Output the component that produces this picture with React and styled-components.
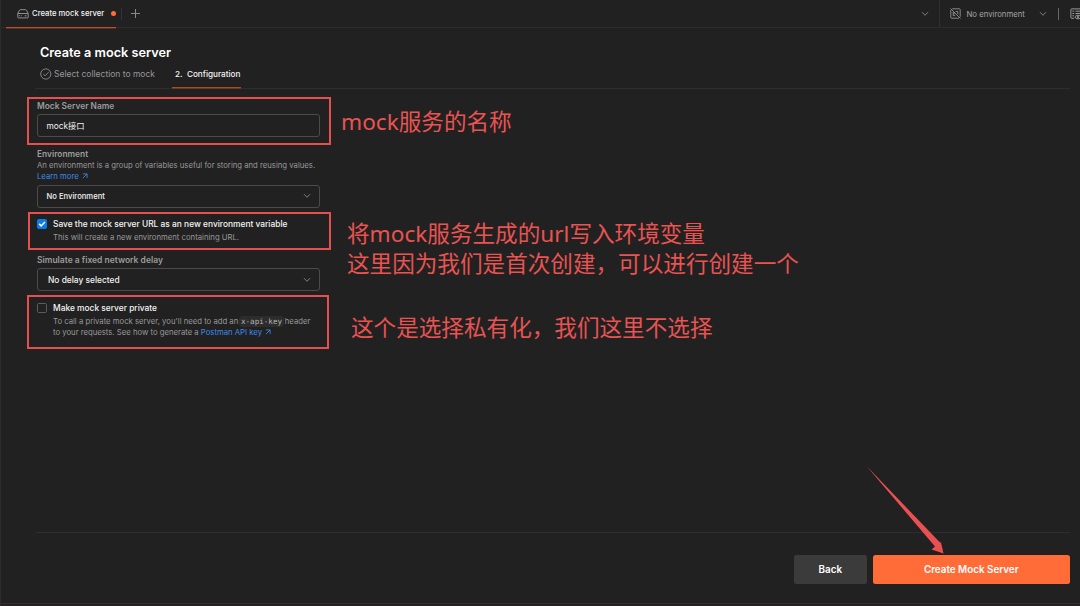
import React from "react";
import styled, { createGlobalStyle } from "styled-components";

const Global = createGlobalStyle`
  *, *::before, *::after { box-sizing: border-box; }
  body { margin: 0; background: #212121; overflow: hidden; }
  button, input { font: inherit; }
`;

const Window = styled.div`
  position: relative;
  width: 1080px;
  height: 606px;
  display: flex;
  flex-direction: column;
  overflow: hidden;
  background: #212121;
  border-left: 1px solid #2c2c2c;
  color: #fff;
  font-family: Inter, "Noto Sans CJK SC", sans-serif;
  font-size: 8.35px;
  white-space: nowrap;
`;

const TabBar = styled.header`
  display: flex;
  height: 28px;
  flex: none;
  border-bottom: 1px solid #2c2c2c;
`;

const Tab = styled.div`
  display: flex;
  align-items: center;
  width: 110px;
  height: 28px;
  margin-left: 5px;
  padding: 0 0 0 11px;
  border-bottom: 1px solid #b8502d;
  box-shadow: 0 1px 0 #5a3022;
  font-weight: 500;
  color: #f2f2f2;
  font-size: 7.7px;
`;

const TabTitle = styled.span`
  margin-left: 3px;
  width: 72px;
`;

const UnsavedDot = styled.span`
  width: 5px;
  height: 5px;
  margin-left: 7px;
  border-radius: 50%;
  background: #ff6c37;
`;

const Separator = styled.span`
  width: 1px;
  height: 12px;
  margin: 8px 0 0 ${(p) => p.$left || 0}px;
  background: ${(p) => p.$color || "#323232"};
`;

const PlusSlot = styled.span`
  margin: 9px auto 0 9px;
  height: 9px;
  display: flex;
`;

const TabMenu = styled.span`
  display: flex;
  align-items: center;
  width: 19px;
  border-right: 1px solid #303030;
`;

const EnvPicker = styled.div`
  display: flex;
  align-items: center;
  width: 118px;
  padding-left: 10px;
  color: #a6a6a6;
  font-size: 7.75px;
`;

const EnvName = styled.span`
  width: 72.5px;
  margin-left: 5.5px;
`;

const QuickLook = styled.span`
  display: flex;
  align-items: center;
  width: 10px;
  margin-left: 11px;
  overflow: hidden;
  svg { flex: none; }
`;

const Heading = styled.section`
  display: flex;
  flex-direction: column;
  flex: none;
  height: 61px;
  margin: 0 10px 0 34px;
  padding: 16px 0 0 5px;
  border-bottom: 1px solid #2e2e2e;
`;

const Title = styled.h1`
  margin: 0;
  font-size: 12.7px;
  line-height: 18px;
  font-weight: 600;
`;

const Steps = styled.nav`
  display: flex;
  height: 27px;
`;

const Step = styled.div`
  display: flex;
  align-items: center;
  gap: 2.5px;
  height: 26px;
  padding-bottom: 1px;
  margin-right: ${(p) => (p.$active ? 0 : 17)}px;
  width: ${(p) => (p.$active ? 69 : 115)}px;
  padding-left: ${(p) => (p.$active ? 3 : 0)}px;
  border-bottom: 1px solid ${(p) => (p.$active ? "#a84b2b" : "transparent")};
  box-shadow: 0 1px 0 ${(p) => (p.$active ? "#6a3625" : "transparent")};
  color: ${(p) => (p.$active ? "#f2f2f2" : "#979797")};
  font-weight: ${(p) => (p.$active ? 500 : 400)};
  font-size: ${(p) => (p.$active ? 8.2 : 8.5)}px;
`;

const Form = styled.main`
  display: flex;
  flex-direction: column;
  flex: 1;
  width: 319px;
  padding: 11px 0 0 36px;
`;

const Label = styled.label`
  height: 12px;
  line-height: 12px;
  margin-top: ${(p) => p.$gap || 0}px;
  font-size: ${(p) => p.$size || 8.4}px;
  font-weight: 600;
  color: #9c9c9c;
`;

const Hint = styled.p`
  margin: 0;
  padding-top: ${(p) => p.$pad || 0}px;
  line-height: 11.3px;
  font-size: 7.73px;
  color: #999;
`;

const Link = styled.a`
  color: #3c8ce8;
  svg { margin-left: 1px; }
`;

const Field = styled.div`
  display: flex;
  align-items: center;
  justify-content: space-between;
  height: 23px;
  margin-top: ${(p) => p.$gap || 0}px;
  padding: 0 8px 0 ${(p) => p.$inset || 8.5}px;
  border: 1px solid #4b4b4b;
  border-radius: 3px;
  font-weight: ${(p) => p.$weight || 500};
  font-size: ${(p) => p.$size || 8.3}px;
  line-height: ${(p) => p.$line || 12}px;
  color: #f2f2f2;
`;

const Option = styled.div`
  display: flex;
  gap: 6px;
  margin-top: ${(p) => p.$gap}px;
`;

const Checkbox = styled.span`
  display: flex;
  align-items: center;
  justify-content: center;
  flex: none;
  width: 10px;
  height: 10px;
  border: 1px solid ${(p) => (p.$checked ? "#097bed" : "#5c5c5c")};
  border-radius: 1.5px;
  background: ${(p) => (p.$checked ? "#097bed" : "transparent")};
`;

const OptionTitle = styled.div`
  height: 12px;
  line-height: 11px;
  font-size: 8.4px;
  font-weight: 500;
  color: #f5f5f5;
`;

const Code = styled.code`
  padding: 0 0.5px;
  border-radius: 2px;
  background: #2c2c2c;
  box-shadow: 0 0 0 0.5px #3b3b3b;
  color: #b5b5b5;
  font-family: "DejaVu Sans Mono", monospace;
  font-size: 7.6px;
`;

const Footer = styled.footer`
  display: flex;
  justify-content: flex-end;
  gap: 5.5px;
  flex: none;
  height: 71px;
  margin: 0 10px 0 34px;
  padding-top: 22px;
  border-top: 1px solid #2e2e2e;
`;

const Button = styled.button`
  width: ${(p) => (p.$primary ? 197.5 : 73.5)}px;
  height: 28.5px;
  padding: 0;
  border: 0;
  border-radius: 2.5px;
  background: ${(p) => (p.$primary ? "#ff6c37" : "#3b3b3b")};
  color: #fff;
  font-weight: 600;
  font-size: 9.85px;
`;

const StatusEdge = styled.div`
  flex: none;
  height: 3px;
  border-top: 1px solid #332b2d;
  background: #252123;
`;

const Outline = styled.div`
  position: absolute;
  left: ${(p) => p.$x - 1}px;
  top: ${(p) => p.$y}px;
  width: ${(p) => p.$w}px;
  height: ${(p) => p.$h}px;
  border: 2px solid #e5504f;
`;

const Note = styled.div`
  position: absolute;
  left: ${(p) => p.$x - 1}px;
  top: ${(p) => p.$y}px;
  font-family: "Noto Sans", "Noto Sans CJK SC", sans-serif;
  font-size: 22.6px;
  font-weight: 400;
  line-height: 29.5px;
  color: #e95352;
`;

const Arrow = styled.svg`
  position: absolute;
  left: 864px;
  top: 465px;
`;

const Chevron = ({ color = "#8c8c8c" }) => (
  <svg width="8" height="6" viewBox="0 0 8 6" fill="none" stroke={color} strokeWidth="0.9">
    <path d="M1 1.2 4 4.3 7 1.2" />
  </svg>
);

const ServerIcon = () => (
  <svg width="12" height="10" viewBox="0 0 12 10" fill="none" stroke="#9a9a9a" strokeWidth="0.9">
    <path d="M.8 4.5 2.5 1.2Q2.8.7 3.4.7H8.6Q9.2.7 9.5 1.2L11.2 4.5V8.3Q11.2 8.9 10.6 8.9H1.4Q.8 8.9.8 8.3ZM.8 4.5H11.2M2.5 6.3V7.2M4.3 6.3V7.2M7.7 6.8H9.5" />
  </svg>
);

const NoEnvIcon = () => (
  <svg width="11" height="11" viewBox="0 0 11 11" fill="none" stroke="#929292" strokeWidth="0.9">
    <path d="M2.2.8H9.4Q10.2.8 10.2 1.6V8.8M8.9 10.2H1.6Q.8 10.2.8 9.4V2.1M.5.5 10.5 10.5M3.2 4V7.6H5.2M3.2 5.7H4.8M5.6 3.4H7.8V6.2" />
  </svg>
);

const QuickLookIcon = () => (
  <svg width="13" height="12" viewBox="0 0 13 12" fill="none" stroke="#a6a6a6" strokeWidth="0.9">
    <path d="M4 10.3H1.6Q.9 10.3.9 9.6V1.6Q.9.9 1.6.9H12M2.4 3.2H4.2M5.4 3.2H10M2.4 5.5H4.2M5.4 5.5H10M2.4 7.8H4" />
    <path d="M4.8 9Q6 7.2 8 7.2T11.2 9Q10 10.9 8 10.9T4.8 9Z" />
    <circle cx="8" cy="9" r=".8" />
  </svg>
);

const StepDone = () => (
  <svg width="12" height="12" viewBox="0 0 12 12" fill="none" stroke="#929292" strokeWidth="0.9">
    <circle cx="6" cy="6" r="5.3" />
    <path d="M3.4 6.1 5.3 7.9 8.8 4.2" />
  </svg>
);

const ExternalIcon = () => (
  <svg width="6" height="6" viewBox="0 0 6 6" fill="none" stroke="currentColor" strokeWidth="0.85">
    <path d="M.8.9H5.1V4.9M5 1 .8 5.2" />
  </svg>
);

export default function App() {
  return (
    <>
      <Global />
      <Window>
        <TabBar>
          <Tab>
            <ServerIcon />
            <TabTitle>Create mock server</TabTitle>
            <UnsavedDot />
          </Tab>
          <Separator $left={5} />
          <PlusSlot>
            <svg width="9" height="9" viewBox="0 0 9 9" stroke="#8a8a8a" strokeWidth="1">
              <path d="M4.5 0V9M0 4.5H9" />
            </svg>
          </PlusSlot>
          <TabMenu><Chevron /></TabMenu>
          <EnvPicker>
            <NoEnvIcon />
            <EnvName>No environment</EnvName>
            <Chevron />
          </EnvPicker>
          <Separator $color="#686868" />
          <QuickLook><QuickLookIcon /></QuickLook>
        </TabBar>

        <Heading>
          <Title>Create a mock server</Title>
          <Steps>
            <Step><StepDone />Select collection to mock</Step>
            <Step $active>2.&nbsp; Configuration</Step>
          </Steps>
        </Heading>

        <Form>
          <Label>Mock Server Name</Label>
          <Field $gap={2} $weight={400}>mock接口</Field>
          <Label $gap={11}>Environment</Label>
          <Hint>
            An environment is a group of variables useful for storing and reusing values.
            <br />
            <Link>Learn more <ExternalIcon /></Link>
          </Hint>
          <Field $gap={2.4} $size={7.65} $line={13}>No Environment<Chevron /></Field>
          <Option $gap={11}>
            <Checkbox $checked>
              <svg width="8" height="8" viewBox="0 0 8 8" fill="none" stroke="#fff" strokeWidth="1.5">
                <path d="M1.2 3.9 3.2 5.9 6.9 2.1" />
              </svg>
            </Checkbox>
            <div>
              <OptionTitle>Save the mock server URL as an new environment variable</OptionTitle>
              <Hint $pad={1}>This will create a new environment containing URL.</Hint>
            </div>
          </Option>
          <Label $gap={10.5} $size={8.5}>Simulate a fixed network delay</Label>
          <Field $gap={2.5} $inset={10} $size={8.4}>No delay selected<Chevron /></Field>
          <Option $gap={11.5}>
            <Checkbox />
            <div>
              <OptionTitle>Make mock server private</OptionTitle>
              <Hint $pad={1}>
                To call a private mock server, you'll need to add an <Code>x-api-key</Code> header
                <br />
                to your requests. See how to generate a <Link>Postman API key <ExternalIcon /></Link>
              </Hint>
            </div>
          </Option>
        </Form>

        <Footer>
          <Button>Back</Button>
          <Button $primary>Create Mock Server</Button>
        </Footer>
        <StatusEdge />

        <Outline $x={27} $y={97} $w={304} $h={48} />
        <Outline $x={28} $y={212} $w={303} $h={38} />
        <Outline $x={27} $y={295} $w={302} $h={54} />
        <Note $x={341} $y={107}>mock服务的名称</Note>
        <Note $x={347} $y={219}>
          将mock服务生成的url写入环境变量
          <br />
          这里因为我们是首次创建，可以进行创建一个
        </Note>
        <Note $x={351} $y={313}>这个是选择私有化，我们这里不选择</Note>
        <Arrow width="82" height="92" viewBox="0 0 82 92">
          <path d="M1.5 1 75.5 78 75.8 76.5 78.5 88.5 66.5 84.5 70 81.5Z" fill="#ea5051" />
        </Arrow>
      </Window>
    </>
  );
}
